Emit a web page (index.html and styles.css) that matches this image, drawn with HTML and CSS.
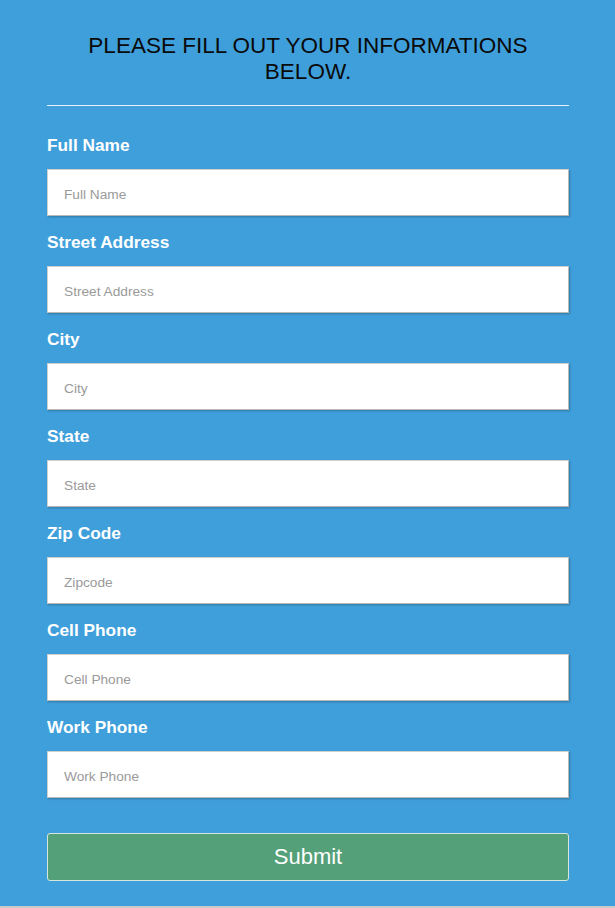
FILE: index.html
```html
<!DOCTYPE html>
<html>
<head>
<meta charset="utf-8">
<link rel="stylesheet" href="styles.css">
</head>
<body>
<div class="page">
  <h1 class="title">PLEASE FILL OUT YOUR INFORMATIONS BELOW.</h1>
  <hr class="rule">
  <form class="form">
    <label class="label">Full Name</label>
    <input class="input" type="text" placeholder="Full Name">
    <label class="label">Street Address</label>
    <input class="input" type="text" placeholder="Street Address">
    <label class="label">City</label>
    <input class="input" type="text" placeholder="City">
    <label class="label">State</label>
    <input class="input" type="text" placeholder="State">
    <label class="label">Zip Code</label>
    <input class="input" type="text" placeholder="Zipcode">
    <label class="label">Cell Phone</label>
    <input class="input" type="text" placeholder="Cell Phone">
    <label class="label">Work Phone</label>
    <input class="input" type="text" placeholder="Work Phone">
    <button class="submit" type="button">Submit</button>
  </form>
</div>
</body>
</html>
```
FILE: styles.css
```css
html, body {
  margin: 0;
  padding: 0;
}
body {
  background: #c9c9c9;
  font-family: "Liberation Sans", Arial, sans-serif;
}
.page {
  background: #3f9fdb;
  height: 906px;
  box-sizing: border-box;
  padding: 33px 46px 0 47px;
}
.title {
  margin: 0 auto;
  max-width: 470px;
  font-size: 22.5px;
  line-height: 26px;
  font-weight: normal;
  text-align: center;
  color: #0a0a0a;
}
.rule {
  margin: 20px 0 0;
  border: 0;
  height: 1px;
  background: #e8eef3;
}
.form {
  display: flex;
  flex-direction: column;
  padding-top: 13px;
}
.label {
  display: block;
  margin: 15px 0 13px;
  font-size: 17.3px;
  line-height: 22px;
  font-weight: bold;
  color: #ffffff;
}
.input {
  box-sizing: border-box;
  height: 47px;
  width: 100%;
  margin: 0;
  padding: 3px 16px 0;
  border: 1px solid #d0d0d0;
  border-right-color: #b9b9b9;
  border-bottom-color: #b9b9b9;
  box-shadow: 1px 1px 2px rgba(0, 0, 0, 0.25);
  background: #ffffff;
  font-family: "Liberation Sans", Arial, sans-serif;
  font-size: 13.7px;
  color: #333;
  outline: none;
}
.input::placeholder {
  color: #9a9a9a;
}
.submit {
  margin-top: 35px;
  height: 48px;
  width: 100%;
  border: 1px solid #d6e6de;
  border-radius: 3px;
  background: #53a079;
  color: #ffffff;
  font-family: "Liberation Sans", Arial, sans-serif;
  font-size: 22px;
  cursor: pointer;
}
```
